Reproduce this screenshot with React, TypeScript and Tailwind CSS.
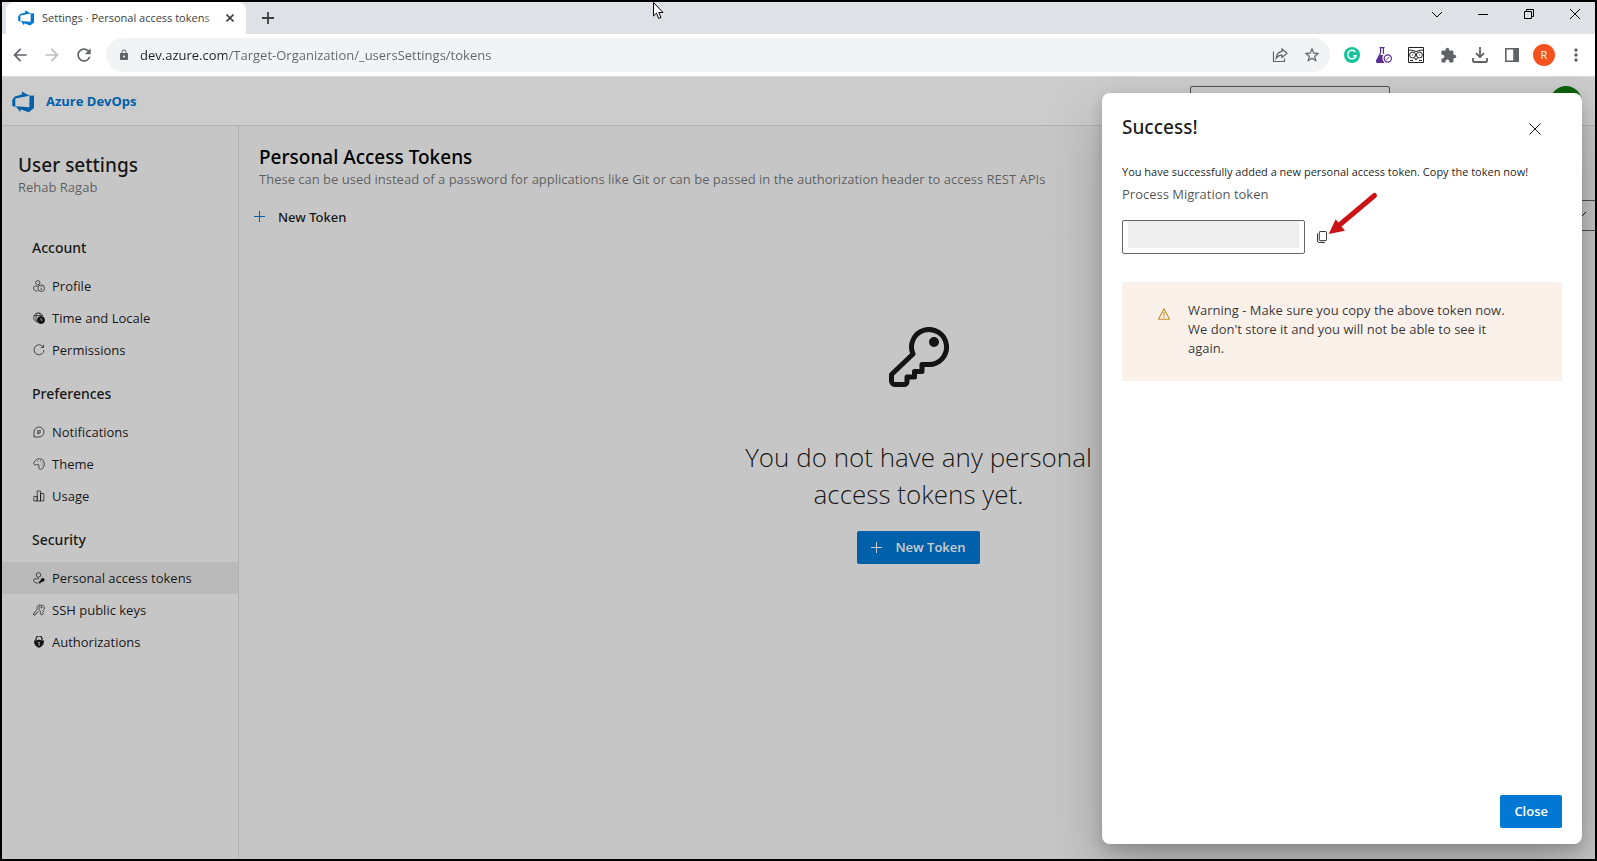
import React from 'react';
import { MdArrowBack, MdArrowForward, MdRefresh, MdLock, MdStarBorder, MdExtension, MdMoreVert } from 'react-icons/md';

function DevOpsLogo({ className }: { className?: string }) {
  return (
    <svg viewBox="0 0 24 24" className={className} fill="currentColor" aria-hidden="true">
      <path d="M24 4.800v13.800l-5.800 4.700-9-3.300v3.200l-5.100-6.600 14.900 1.200V5.200zM19.100 5.300 10.800.5v3.300L3.100 6.100.300 9.500v6.700l3.300 1.400V8.300z" />
    </svg>
  );
}

function Glyph({ children }: { children: React.ReactNode }) {
  return (
    <svg viewBox="0 0 12 12" className="size-3 shrink-0" fill="none" stroke="currentColor" strokeWidth="0.7" aria-hidden="true">
      {children}
    </svg>
  );
}

type Item = { label: string; icon: React.ReactNode; active?: boolean };

const groups: { title: string; items: Item[] }[] = [
  {
    title: 'Account',
    items: [
      {
        label: 'Profile',
        icon: (
          <Glyph>
            <circle cx="4.8" cy="2.7" r="2.1" />
            <path d="M4.500 6.200H2.200C.9 6.200.5 7 .5 8c0 1.800 1.600 3 4 3.100" />
            <circle cx="8.2" cy="8.2" r="3.3" />
            <path d="M8.200 7.800v2.200M8.200 6.200v.8" />
          </Glyph>
        ),
      },
      {
        label: 'Time and Locale',
        icon: (
          <Glyph>
            <path d="M4.500 10.200A4.700 4.700 0 1 1 9.800 4M3.600 9.500C2.400 6.500 2.800 3 4.500 1M1 3.600h8M6 1c.8.7 1.200 1.500 1.400 2.500" />
            <circle cx="8" cy="8" r="3.6" fill="currentColor" />
            <path d="M8 6v2.200h1.600" className="stroke-[#f8f8f8]" />
          </Glyph>
        ),
      },
      {
        label: 'Permissions',
        icon: (
          <Glyph>
            <path d="M10.300 3.200A5 5 0 1 0 11 6M10.500.8v2.700H7.800" />
          </Glyph>
        ),
      },
    ],
  },
  {
    title: 'Preferences',
    items: [
      {
        label: 'Notifications',
        icon: (
          <Glyph>
            <path d="M1 11V6a5 5 0 1 1 5 5zM4 4.800h4M4 6.200h4M4 7.600h2.500" />
          </Glyph>
        ),
      },
      {
        label: 'Theme',
        icon: (
          <Glyph>
            <path d="M.8 4.800C2 2 4.200.8 6.500.8 9.600.8 11.300 3 11.300 6S9.500 11.300 7.500 11.300c-1.600 0-1.900-1.300-1.500-2.500.4-1.500-.4-2.700-1.800-2.300-1.200.4-2 .8-2.700.3C.9 6.400.5 5.700.8 4.800z" />
            <path d="M4.500 3.300h.8M7 3h.8M8.800 4.800h.8M8.800 7.200h.8" />
          </Glyph>
        ),
      },
      {
        label: 'Usage',
        icon: (
          <Glyph>
            <path d="M.8 11V6.500h3.400V11zM4.200 11V1h3.400v10zM7.600 11V3.500h3.200V11z" />
          </Glyph>
        ),
      },
    ],
  },
  {
    title: 'Security',
    items: [
      {
        label: 'Personal access tokens',
        active: true,
        icon: (
          <Glyph>
            <circle cx="5.5" cy="2.9" r="2.3" />
            <path d="M6 6.800H2.200C1 6.800.6 7.500.6 8.200c0 1.800 2 3 4.600 3" />
            <path d="m6.200 11 3-3" strokeWidth="1.8" />
            <circle cx="9.8" cy="7.8" r="1.5" fill="currentColor" />
          </Glyph>
        ),
      },
      {
        label: 'SSH public keys',
        icon: (
          <Glyph>
            <path d="M.6 9.500 4 5.500C3.500 2.500 5 1 7 .9M.6 9.500V11h1.600l.6-1.300 1-.3.6-1.500 1.100-.4" />
            <path d="M7.300 7C5.500 5.500 5.600 2.500 7.800 1.300c2.500-.8 4.300 1.700 3.300 3.900-.3.600-.6 1-1 1.300l.4 1.300-.8.900.6 1-1.200 1.400-1.800-1.200z" />
            <circle cx="8.5" cy="3.3" r="0.6" />
          </Glyph>
        ),
      },
      {
        label: 'Authorizations',
        icon: (
          <Glyph>
            <path d="M3 4.500V3a3 3 0 0 1 6 0v1.500" strokeWidth="1.2" />
            <path d="M1 4.500c2 0 3.500-.3 5-1 1.500.7 3 1 5 1 0 3.500-1.200 6-5 7.300C2.200 10.500 1 8 1 4.500z" fill="currentColor" stroke="none" />
            <path d="M6 6.500v2.500M5 6.500h2M5 9h2" className="stroke-[#f8f8f8]" />
          </Glyph>
        ),
      },
    ],
  },
];

function PlusIcon() {
  return (
    <svg viewBox="0 0 12 12" className="size-3 shrink-0" stroke="currentColor" fill="none" aria-hidden="true">
      <path d="M5.500 0v11M0 5.500h11" />
    </svg>
  );
}

const windowControls = [
  { label: 'Search tabs', path: 'm0 3 5 5 5-5' },
  { label: 'Minimize', path: 'M0 5.500h10' },
  { label: 'Restore', path: 'M.5 2.500h7v7h-7zM2.500 2.500v-2h7v7h-2' },
  { label: 'Close window', path: 'm0 0 10 10M10 0 0 10' },
];

function TabStrip() {
  return (
    <div className="flex h-8 items-stretch overflow-hidden bg-[#dee1e6] pl-1">
      <div className="flex w-60 items-center rounded-t-lg bg-white pr-2 pl-3">
        <DevOpsLogo className="size-4 shrink-0 text-[#0078d7]" />
        <div className="relative ml-2 min-w-0 flex-1 text-[11px] whitespace-nowrap text-[#3c4043]">
          Settings · Personal access tokens
          <span className="absolute inset-y-0 right-0 w-5 bg-gradient-to-r from-transparent to-white" />
        </div>
        <button aria-label="Close tab" className="flex size-4 items-center justify-center text-[#3c4043]">
          <svg viewBox="0 0 8 8" className="size-2" stroke="currentColor" strokeWidth="1.6" aria-hidden="true">
            <path d="m.5.5 7 7M7.500.5l-7 7" />
          </svg>
        </button>
      </div>
      <button aria-label="New tab" className="flex w-11 items-center justify-center text-[#3c4043]">
        <svg viewBox="0 0 12 12" className="size-3" stroke="currentColor" strokeWidth="1.8" aria-hidden="true">
          <path d="M6 0v12M0 6h12" />
        </svg>
      </button>
      <div className="-mr-[3px] ml-auto flex items-center pb-2">
        {windowControls.map((c) => (
          <button key={c.label} aria-label={c.label} className="flex h-6 w-[46px] items-center justify-center">
            <svg viewBox="0 0 10 10" className="size-[10px]" fill="none" stroke="black" aria-hidden="true">
              <path d={c.path} />
            </svg>
          </button>
        ))}
      </div>
    </div>
  );
}

function ToolButton({ label, children }: { label: string; children: React.ReactNode }) {
  return (
    <button aria-label={label} className="flex w-8 shrink-0 items-center justify-center text-[#5f6368]">
      {children}
    </button>
  );
}

function Toolbar() {
  return (
    <div className="flex items-center border-b border-[#d5d7da] bg-white py-1 pr-[3px] pl-0.5">
      <ToolButton label="Back">
        <MdArrowBack className="size-5" />
      </ToolButton>
      <ToolButton label="Forward">
        <MdArrowForward className="size-5 text-[#bdbfc1]" />
      </ToolButton>
      <ToolButton label="Reload">
        <MdRefresh className="size-5" />
      </ToolButton>
      <div className="mr-1.5 ml-1.5 flex h-[34px] flex-1 items-center rounded-full bg-[#f1f3f4] pr-0.5 pl-3 text-[#5f6368]">
        <MdLock className="size-3 shrink-0" />
        <input
          aria-label="Address"
          className="ml-2.5 min-w-0 flex-1 bg-[linear-gradient(to_right,#202124_87px,#5f6368_87px)] bg-clip-text text-[13px] text-transparent outline-none"
          defaultValue="dev.azure.com/Target-Organization/_usersSettings/tokens"
        />
        <ToolButton label="Share this page">
          <svg viewBox="0 0 16 16" className="size-4" fill="none" stroke="currentColor" strokeWidth="1.2" aria-hidden="true">
            <path d="M1.500 4.500v10h11v-3M10 2l5 4.300-5 4.200V8.200c-2.500 0-4.300.8-5.800 3 .3-3.500 2.300-6.300 5.800-6.800z" />
          </svg>
        </ToolButton>
        <ToolButton label="Bookmark this tab">
          <MdStarBorder className="size-[18px]" />
        </ToolButton>
      </div>
      <ToolButton label="Grammarly">
        <svg viewBox="0 0 16 16" className="size-4" fill="none" aria-hidden="true">
          <circle cx="8" cy="8" r="8" fill="#15c39a" />
          <path d="M11.500 5A4.300 4.300 0 1 0 12.200 8.700H9.200M12.300 8.700 10.900 11" stroke="white" strokeWidth="1.400" />
        </svg>
      </ToolButton>
      <ToolButton label="Test extension">
        <svg viewBox="0 0 16 16" className="size-4" fill="none" stroke="#5c2d91" aria-hidden="true">
          <path d="M3.500.6h5M4.600.6v5.200L.6 13.500c-.3.900 0 1.900 1 1.900H8M7.400.6v5.200l.6 1.200" strokeWidth="1.200" />
          <path d="M4 8h3.200c-1.300 2.200-1 4.800.8 7.400H1.800c-1 0-1.500-.9-1.100-1.700z" fill="#5c2d91" stroke="none" />
          <circle cx="11.800" cy="11.500" r="3.600" strokeWidth="1.200" />
          <path d="m10 13.300 3.600-3.600" />
        </svg>
      </ToolButton>
      <ToolButton label="Owl extension">
        <svg viewBox="0 0 16 16" className="size-4" fill="none" stroke="#202124" aria-hidden="true">
          <path d="M.5.5h15v15H.5z" />
          <circle cx="4.600" cy="8" r="3" />
          <circle cx="11.400" cy="8" r="3" />
          <path d="M.5 3.500 3 3l5 1.500L13 3l2.500.5M6.600 10.800 8 13l1.400-2.200M2 13.500h3M11 13.500h3" />
          <path d="M4.600 7.500v1M11.400 7.500v1" />
        </svg>
      </ToolButton>
      <ToolButton label="Extensions">
        <MdExtension className="size-[17px]" />
      </ToolButton>
      <ToolButton label="Downloads">
        <svg viewBox="0 0 16 16" className="size-4" fill="none" stroke="currentColor" strokeWidth="1.800" aria-hidden="true">
          <path d="M8 0v10M4 6.200l4 4 4-4M1 11v3c0 .7.300 1 1 1h12c.700 0 1-.3 1-1v-3" />
        </svg>
      </ToolButton>
      <ToolButton label="Side panel">
        <svg viewBox="0 0 14 14" className="size-3.5" fill="none" stroke="currentColor" strokeWidth="1.600" aria-hidden="true">
          <path d="M.8.8h12.400v12.400H.8z" />
          <path d="M9 .8h4.200v12.400H9z" fill="currentColor" />
        </svg>
      </ToolButton>
      <ToolButton label="Account R">
        <span className="flex size-[22px] items-center justify-center rounded-full bg-[#f4511e] text-[11px] text-white">R</span>
      </ToolButton>
      <ToolButton label="More">
        <MdMoreVert className="size-5" />
      </ToolButton>
    </div>
  );
}

function Sidebar() {
  return (
    <nav className="w-[237px] shrink-0 border-r border-[#dedede]">
      <div className="h-[94px] px-4 pt-[26px]">
        <h2 className="font-['Noto_Sans',sans-serif] text-[19px] leading-[26px] font-medium text-black/90">User settings</h2>
        <p className="text-[13px] leading-[18px] text-black/55">Rehab Ragab</p>
      </div>
      {groups.map((g) => (
        <section key={g.title}>
          <h3 className="flex h-[50px] items-center px-[30px] pt-1.5 font-['Noto_Sans',sans-serif] text-sm font-medium">{g.title}</h3>
          {g.items.map((item) => (
            <a
              key={item.label}
              href="#"
              className={item.active ? 'flex h-8 items-center gap-[7px] bg-[#e9e9e9] px-[31px]' : 'flex h-8 items-center gap-[7px] px-[31px]'}
            >
              {item.icon}
              <span className="text-[13px]">{item.label}</span>
            </a>
          ))}
        </section>
      ))}
    </nav>
  );
}

function TokensPage() {
  return (
    <main className="min-w-0 flex-1 overflow-hidden">
      <div className="px-5 pt-[18px]">
        <h1 className="font-['Noto_Sans',sans-serif] text-[19px] leading-[26px] font-medium text-black">Personal Access Tokens</h1>
        <p className="text-[13px] leading-[18px] text-black/55">
          These can be used instead of a password for applications like Git or can be passed in the authorization header to access REST APIs
        </p>
      </div>
      <div className="mt-3 flex items-start justify-between border-b border-[#f4f4f4] pl-[15px]">
        <button className="flex h-[33px] items-center gap-3 pt-px font-['Noto_Sans',sans-serif] text-[13px] font-medium">
          <span className="text-[#0078d4]">
            <PlusIcon />
          </span>
          New Token
        </button>
        <div className="relative -mr-2 h-[31px] w-44">
          <select aria-label="Filter tokens" className="h-full w-full appearance-none border border-black/60 bg-transparent" />
          <svg viewBox="0 0 12 12" className="absolute top-2 right-4 size-3" fill="none" stroke="currentColor" aria-hidden="true">
            <path d="m1 4 5 5 5-5" />
          </svg>
        </div>
      </div>
      <div className="flex flex-col items-center pt-[93px] pl-[3px]">
        <svg viewBox="0 0 60 60" className="size-[60px]" fill="none" stroke="currentColor" strokeWidth="5" strokeLinejoin="round" aria-hidden="true">
          <path d="M40 37.500A17.500 17.500 0 1 0 24 27L2.500 47.500V54A3.500 3.500 0 0 0 6 57.500h9a3 3 0 0 0 3-3V50h7.500v-5.500H33v-7z" />
          <circle cx="45" cy="15" r="5" fill="currentColor" stroke="none" />
        </svg>
        <p className="mt-[52px] max-w-[400px] text-center text-[26px] leading-[37px] font-light">You do not have any personal access tokens yet.</p>
        <button className="mt-[18px] flex h-[33px] items-center gap-3 rounded-xs bg-[#0078d4] px-3.5 text-[13px] font-semibold text-white">
          <PlusIcon />
          New Token
        </button>
      </div>
    </main>
  );
}

function SuccessDialog() {
  return (
    <div
      role="dialog"
      aria-labelledby="dialog-title"
      className="absolute top-4 right-[13px] bottom-[15px] flex w-[480px] flex-col rounded-lg bg-white px-5 pb-4 shadow-[0_26px_58px_rgba(0,0,0,0.22),0_5px_14px_rgba(0,0,0,0.18)]"
    >
      <div className="flex items-center justify-between pt-[18px] pr-[11px]">
        <h2 id="dialog-title" className="font-['Noto_Sans',sans-serif] text-[19px] leading-7 font-medium text-black/90">
          Success!
        </h2>
        <button aria-label="Dismiss" className="flex h-8 w-8 items-center justify-center pt-1">
          <svg viewBox="0 0 12 12" className="size-3" fill="none" stroke="currentColor" aria-hidden="true">
            <path d="m.5.5 11 11M11.500.5l-11 11" />
          </svg>
        </button>
      </div>
      <p className="mt-[18px] text-[11px] leading-[22px] text-black/90">You have successfully added a new personal access token. Copy the token now!</p>
      <label htmlFor="token" className="text-[13px] leading-[22px] text-black/70">
        Process Migration token
      </label>
      <div className="mt-[15px] flex items-center gap-3">
        <div className="h-[34px] w-[183px] rounded-xs border border-black/60 px-[5px] pb-[5px]">
          <input id="token" readOnly className="block h-full w-full bg-[#eeeeee] outline-none" />
        </div>
        <button aria-label="Copy token">
          <svg viewBox="0 0 11 13" className="h-3 w-[10px]" fill="none" stroke="currentColor" aria-hidden="true">
            <rect x="2.5" y="0.5" width="8" height="10" rx="1" />
            <path d="M.5 2.500v8a2 2 0 0 0 2 2h6" />
          </svg>
        </button>
      </div>
      <div className="mt-7 flex gap-[18px] bg-[#fbf1eb] pt-[19px] pr-11 pb-[23px] pl-9">
        <svg viewBox="0 0 12 12" className="mt-[7px] size-3 shrink-0" fill="none" stroke="#c19023" strokeWidth="1.100" strokeLinejoin="round" aria-hidden="true">
          <path d="M6 .7 11.500 11.300H.5zM6 4v4M6 8.800v1.200" />
        </svg>
        <p className="text-[13px] leading-[19px] text-black/80">
          Warning - Make sure you copy the above token now. We don't store it and you will not be able to see it again.
        </p>
      </div>
      <button className="mt-auto h-[33px] self-end rounded-xs bg-[#0078d4] px-3.5 text-[13px] font-semibold text-white">Close</button>
      <svg viewBox="0 0 54 46" className="absolute top-[98px] left-[224px] h-[46px] w-[54px]" aria-hidden="true">
        <path d="M48.500 4.500 14 33.500" stroke="#cb1216" strokeWidth="5" strokeLinecap="round" />
        <path d="M2.700 43 9.700 28.300 19 39.700z" fill="#cb1216" />
      </svg>
    </div>
  );
}

export default function App() {
  return (
    <div className="relative flex h-screen flex-col border-2 border-black bg-[#f8f8f8] font-['Open_Sans',sans-serif] text-sm text-black/90">
      <TabStrip />
      <svg viewBox="0 0 12 18" className="absolute top-0 left-[651px] h-[18px] w-3" fill="white" stroke="black" aria-hidden="true">
        <path d="M.5.5v13.500l3-2.800 2.200 5.300 2.300-1-2.200-5h4.200z" />
      </svg>
      <Toolbar />
      <div className="relative flex min-h-0 flex-1 flex-col overflow-hidden">
        <header className="flex h-[49px] shrink-0 items-center gap-3 border-b border-[#dedede] bg-white pt-px pr-[13px] pl-2.5">
          <DevOpsLogo className="size-[22px] text-[#0078d4]" />
          <a href="#" className="text-[13px] font-bold text-[#0078d4]">
            Azure DevOps
          </a>
          <input aria-label="Search" className="mr-[148px] ml-auto h-8 w-[200px] rounded-xs border border-black/60" />
          <span className="size-8 rounded-full bg-[#107c10]" />
        </header>
        <div className="flex min-h-0 flex-1">
          <Sidebar />
          <TokensPage />
        </div>
        <div className="absolute inset-0 bg-black/20" />
        <SuccessDialog />
      </div>
    </div>
  );
}
